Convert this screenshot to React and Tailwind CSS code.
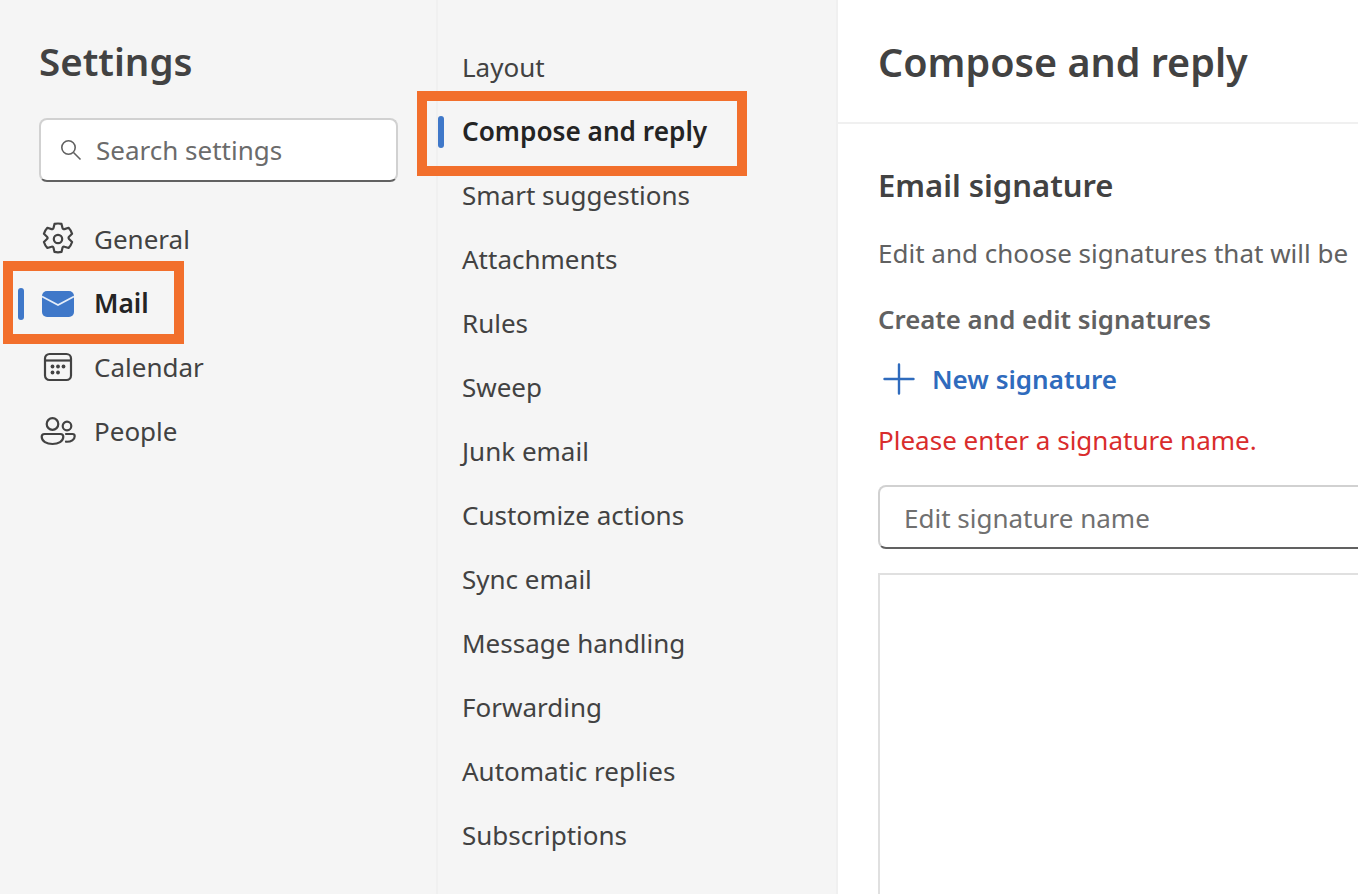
import React from "react";

const font = { fontFamily: '"Noto Sans", "Open Sans", sans-serif' };

function Gear() {
  return (
    <svg width="38" height="38" viewBox="0 0 36 36" fill="none" stroke="#424242" strokeWidth="2.2" strokeLinejoin="round">
      <path d="M18 2.500c1.200 0 2.400.1 3.500.4l1 4.200c.2.8 1.200 1.300 2 1l4.100-1.300c1.600 1.700 2.800 3.800 3.500 6l-3.100 2.900c-.6.6-.6 1.700 0 2.300l3.100 3c-.7 2.200-1.900 4.300-3.500 6l-4.100-1.300c-.8-.3-1.800.2-2 1l-1 4.200c-2.300.6-4.700.6-7 0l-1-4.200c-.2-.8-1.200-1.300-2-1l-4.100 1.300c-1.600-1.700-2.800-3.800-3.500-6l3.100-3c.6-.6.6-1.700 0-2.300l-3.100-2.900c.7-2.200 1.900-4.300 3.500-6l4.100 1.300c.8.3 1.800-.2 2-1l1-4.200c1.100-.3 2.300-.4 3.500-.4Z" />
      <circle cx="18" cy="18" r="4.200" />
    </svg>
  );
}

function MailIcon() {
  return (
    <svg width="34" height="26" viewBox="0 0 34 26">
      <rect width="32" height="26" x="1" rx="5" fill="#3f78c9" />
      <path d="M1 5.500 17 14l16-8.500" fill="none" stroke="#e6eef9" strokeWidth="1.800" />
    </svg>
  );
}

function CalendarIcon() {
  return (
    <svg width="30" height="30" viewBox="0 0 30 30" fill="none">
      <rect x="2" y="2" width="26" height="26" rx="4.500" stroke="#424242" strokeWidth="2.200" />
      <path d="M2 8.500h26" stroke="#424242" strokeWidth="2.200" />
      <g fill="#424242">
        <circle cx="9.500" cy="14.500" r="1.900" /><circle cx="15" cy="14.500" r="1.900" /><circle cx="20.500" cy="14.500" r="1.900" />
        <circle cx="9.500" cy="20.500" r="1.900" /><circle cx="15" cy="20.500" r="1.900" />
      </g>
    </svg>
  );
}

function PeopleIcon() {
  return (
    <svg width="36" height="30" viewBox="0 0 36 30" fill="none" stroke="#424242" strokeWidth="2.200">
      <circle cx="12.500" cy="8" r="5.800" />
      <circle cx="27" cy="10" r="4.300" />
      <path d="M4.500 18h16c1.600 0 2.800 1.200 2.800 2.700 0 4.600-5 7.300-10.800 7.300S1.700 25.300 1.700 20.700C1.700 19.200 2.900 18 4.500 18Z" />
      <path d="M26 18h6.500c1.200 0 2.200 1 2.200 2.200 0 3.400-3.400 5.800-8.700 5.500" strokeLinecap="round" />
    </svg>
  );
}

function Indicator() {
  return <span className="absolute left-0 top-[16px] h-[32px] w-[6px] rounded-full bg-[#3f78c9]" />;
}

function NavItem({ icon, label, active }) {
  return (
    <div className={`relative flex h-[64px] items-center pl-[22px] ${active ? "text-[26.300px] font-semibold text-[#242424]" : "pb-[2px] text-[#424242]"}`}>
      {active && <Indicator />}
      <span className="flex w-[36px] justify-center">{icon}</span>
      <span className="ml-[18px]">{label}</span>
    </div>
  );
}

const subItems = ["Layout", "Compose and reply", "Smart suggestions", "Attachments", "Rules", "Sweep", "Junk email", "Customize actions", "Sync email", "Message handling", "Forwarding", "Automatic replies", "Subscriptions"];

export default function App() {
  return (
    <div style={font} className="relative flex h-[894px] w-[1358px] overflow-hidden bg-[#f5f5f5] text-[26px] text-[#424242]">
      <aside className="w-[436px] shrink-0 pl-[18px]">
        <h1 className="ml-[21px] mt-[33px] text-[38.500px] leading-[56px] font-semibold text-[#424242]">Settings</h1>
        <div className="ml-[21px] mt-[29px] flex h-[64px] w-[359px] items-center rounded-[8px] border-2 border-[#d1d1d1] border-b-[#616161] bg-white pl-[19px] text-[#6b6b6b]">
          <svg width="22" height="22" viewBox="0 0 22 22" fill="none" stroke="#616161" strokeWidth="1.600"><circle cx="8.500" cy="8.500" r="6.700" /><path d="m13.500 13.500 7 7" /></svg>
          <span className="ml-[14px] pt-[1px]">Search settings</span>
        </div>
        <nav className="mt-[26px]">
          <NavItem icon={<Gear />} label="General" />
          <NavItem icon={<MailIcon />} label="Mail" active />
          <NavItem icon={<CalendarIcon />} label="Calendar" />
          <NavItem icon={<PeopleIcon />} label="People" />
        </nav>
      </aside>

      <section className="w-[402px] shrink-0 border-x-2 border-[#f0f0f0] pt-[36px]">
        {subItems.map((s) => (
          <div key={s} className={`relative flex h-[64px] items-center pl-[24px] ${s === "Compose and reply" ? "text-[26.200px] font-semibold text-[#242424]" : "pb-[2px]"}`}>
            {s === "Compose and reply" && <Indicator />}
            {s}
          </div>
        ))}
      </section>

      <main className="min-w-0 flex-1 bg-white">
        <header className="flex h-[124px] items-center border-b-2 border-[#f0f0f0] pl-[40px] pt-[4px]">
          <h2 className="whitespace-nowrap text-[39.500px] font-semibold">Compose and reply</h2>
        </header>
        <div className="pl-[40px]">
          <h3 className="mt-[39px] text-[31px] leading-[44px] font-semibold">Email signature</h3>
          <p className="mt-[26px] whitespace-nowrap leading-[40px] text-[#616161]">Edit and choose signatures that will be</p>
          <p className="mt-[26px] text-[25.800px] leading-[40px] font-semibold text-[#616161]">Create and edit signatures</p>
          <div className="mt-[20px] flex h-[40px] items-center pl-[5px] font-semibold text-[#2f6bbd]">
            <svg width="32" height="32" viewBox="0 0 32 32" stroke="#2f6bbd" strokeWidth="2.400" strokeLinecap="round"><path d="M16 1.500v29M1.500 16h29" /></svg>
            <span className="ml-[17px]">New signature</span>
          </div>
          <p className="mt-[21px] leading-[40px] text-[#d92c2c]">Please enter a signature name.</p>
          <div className="mt-[25px] flex h-[64px] w-[600px] items-center rounded-[8px] border-2 border-[#d1d1d1] border-b-[#616161] bg-white pl-[24px] pt-[2px] text-[#707070]">Edit signature name</div>
          <div className="mt-[24px] h-[400px] w-[600px] border-2 border-[#e0e0e0]" />
        </div>
      </main>

      <div className="absolute left-[3px] top-[261px] h-[83px] w-[181px] border-[10px] border-[#f26f2c]" />
      <div className="absolute left-[417px] top-[91px] h-[85px] w-[330px] border-[10px] border-[#f26f2c]" />
    </div>
  );
}
